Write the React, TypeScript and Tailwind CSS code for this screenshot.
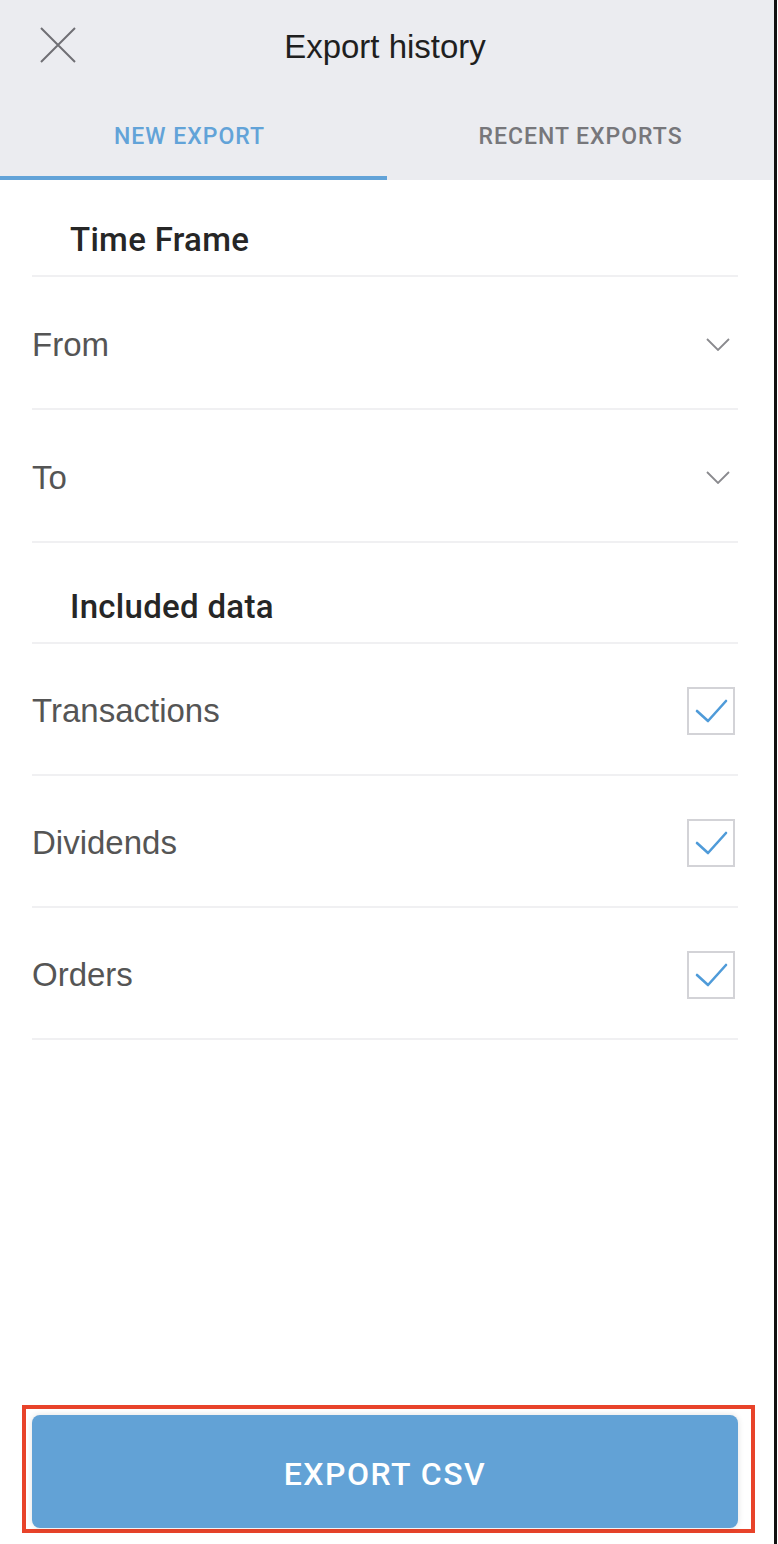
import { useState } from 'react'

const font = { fontFamily: '"Liberation Sans", Arial, sans-serif' }
const medium = { fontFamily: 'Roboto, "Liberation Sans", Arial, sans-serif' }

function CloseIcon() {
  return (
    <svg width="36" height="36" viewBox="0 0 36 36" fill="none">
      <path d="M1 1L35 35M35 1L1 35" stroke="#6f6f74" strokeWidth="2" />
    </svg>
  )
}

function Chevron() {
  return (
    <svg width="24" height="13" viewBox="0 0 24 13" fill="none">
      <path d="M1 1L12 12L23 1" stroke="#8a8a8e" strokeWidth="1.8" />
    </svg>
  )
}

function CheckBox({ checked, onClick }: { checked: boolean; onClick: () => void }) {
  return (
    <button
      onClick={onClick}
      className="w-[48px] h-[48px] border-2 border-[#d3d3d7] bg-white flex items-center justify-center"
    >
      {checked && (
        <svg width="44" height="44" viewBox="0 0 44 44" fill="none">
          <path d="M8 22L19 32L37 12" stroke="#4f9bd9" strokeWidth="2.6" strokeLinecap="round" strokeLinejoin="round" />
        </svg>
      )}
    </button>
  )
}

function Divider() {
  return <div className="ml-[32px] mr-[36px] h-[2px] bg-[#f0f0f2]" />
}

function Heading({ label, height }: { label: string; height: string }) {
  return (
    <div className={`${height} flex items-end pl-[70px] pb-[15px]`}>
      <span className="text-[33px] leading-[40px] font-medium tracking-[0.3px] text-[#262626]" style={medium}>
        {label}
      </span>
    </div>
  )
}

export default function App() {
  const [tab, setTab] = useState<'new' | 'recent'>('new')
  const [included, setIncluded] = useState({ transactions: true, dividends: true, orders: true })

  const toggle = (key: keyof typeof included) =>
    setIncluded({ ...included, [key]: !included[key] })

  return (
    <div className="flex w-[778px] h-[1544px] bg-white" style={font}>
      <div className="w-[774px] h-full flex flex-col">
        {/* En-tête */}
        <div className="bg-[#ebecf0]">
          <div className="h-[94px] relative flex items-center justify-center pr-[4px]">
            <button className="absolute left-[40px] top-[27px]">
              <CloseIcon />
            </button>
            <span className="text-[33px] text-[#1f1f1f]">Export history</span>
          </div>
          <div className="flex h-[86px]">
            <button
              onClick={() => setTab('new')}
              className={`w-[387px] flex items-center justify-center pr-[8px] border-b-4 ${
                tab === 'new' ? 'border-[#62a3d8] text-[#62a3d8]' : 'border-transparent text-[#77777b]'
              }`}
            >
              <span className="text-[23px] font-medium tracking-[1px] pt-[4px]" style={medium}>NEW EXPORT</span>
            </button>
            <button
              onClick={() => setTab('recent')}
              className={`w-[387px] flex items-center justify-center border-b-4 ${
                tab === 'recent' ? 'border-[#62a3d8] text-[#62a3d8]' : 'border-transparent text-[#77777b]'
              }`}
            >
              <span className="text-[23px] font-medium tracking-[1px] pt-[4px]" style={medium}>RECENT EXPORTS</span>
            </button>
          </div>
        </div>

        <Heading label="Time Frame" height="h-[95px]" />
        <Divider />
        {['From', 'To'].map((label) => (
          <div key={label}>
            <div className="h-[131px] flex items-center justify-between pl-[32px] pr-[44px] pt-[4px]">
              <span className="text-[33px] text-[#555555]">{label}</span>
              <Chevron />
            </div>
            <Divider />
          </div>
        ))}

        <Heading label="Included data" height="h-[99px]" />
        <Divider />
        {([
          ['transactions', 'Transactions'],
          ['dividends', 'Dividends'],
          ['orders', 'Orders'],
        ] as const).map(([key, label]) => (
          <div key={key}>
            <div className="h-[130px] flex items-center justify-between pl-[32px] pr-[39px] pt-[4px]">
              <span className="text-[33px] text-[#555555]">{label}</span>
              <CheckBox checked={included[key]} onClick={() => toggle(key)} />
            </div>
            <Divider />
          </div>
        ))}

        <div className="flex-1" />

        <div className="ml-[22px] w-[733px] border-4 border-[#e8432a] pt-[6px] pl-[6px] pr-[13px] pb-[1px] mb-[11px]">
          <button className="w-[706px] h-[113px] rounded-[8px] bg-[#62a2d6] shadow-[0_0_6px_rgba(0,0,0,0.12)] flex items-center justify-center pt-[4px]">
            <span className="text-[32px] font-medium tracking-[1.5px] text-white" style={medium}>EXPORT CSV</span>
          </button>
        </div>
      </div>
      <div className="w-[3px] h-full bg-[#111111]" />
    </div>
  )
}
